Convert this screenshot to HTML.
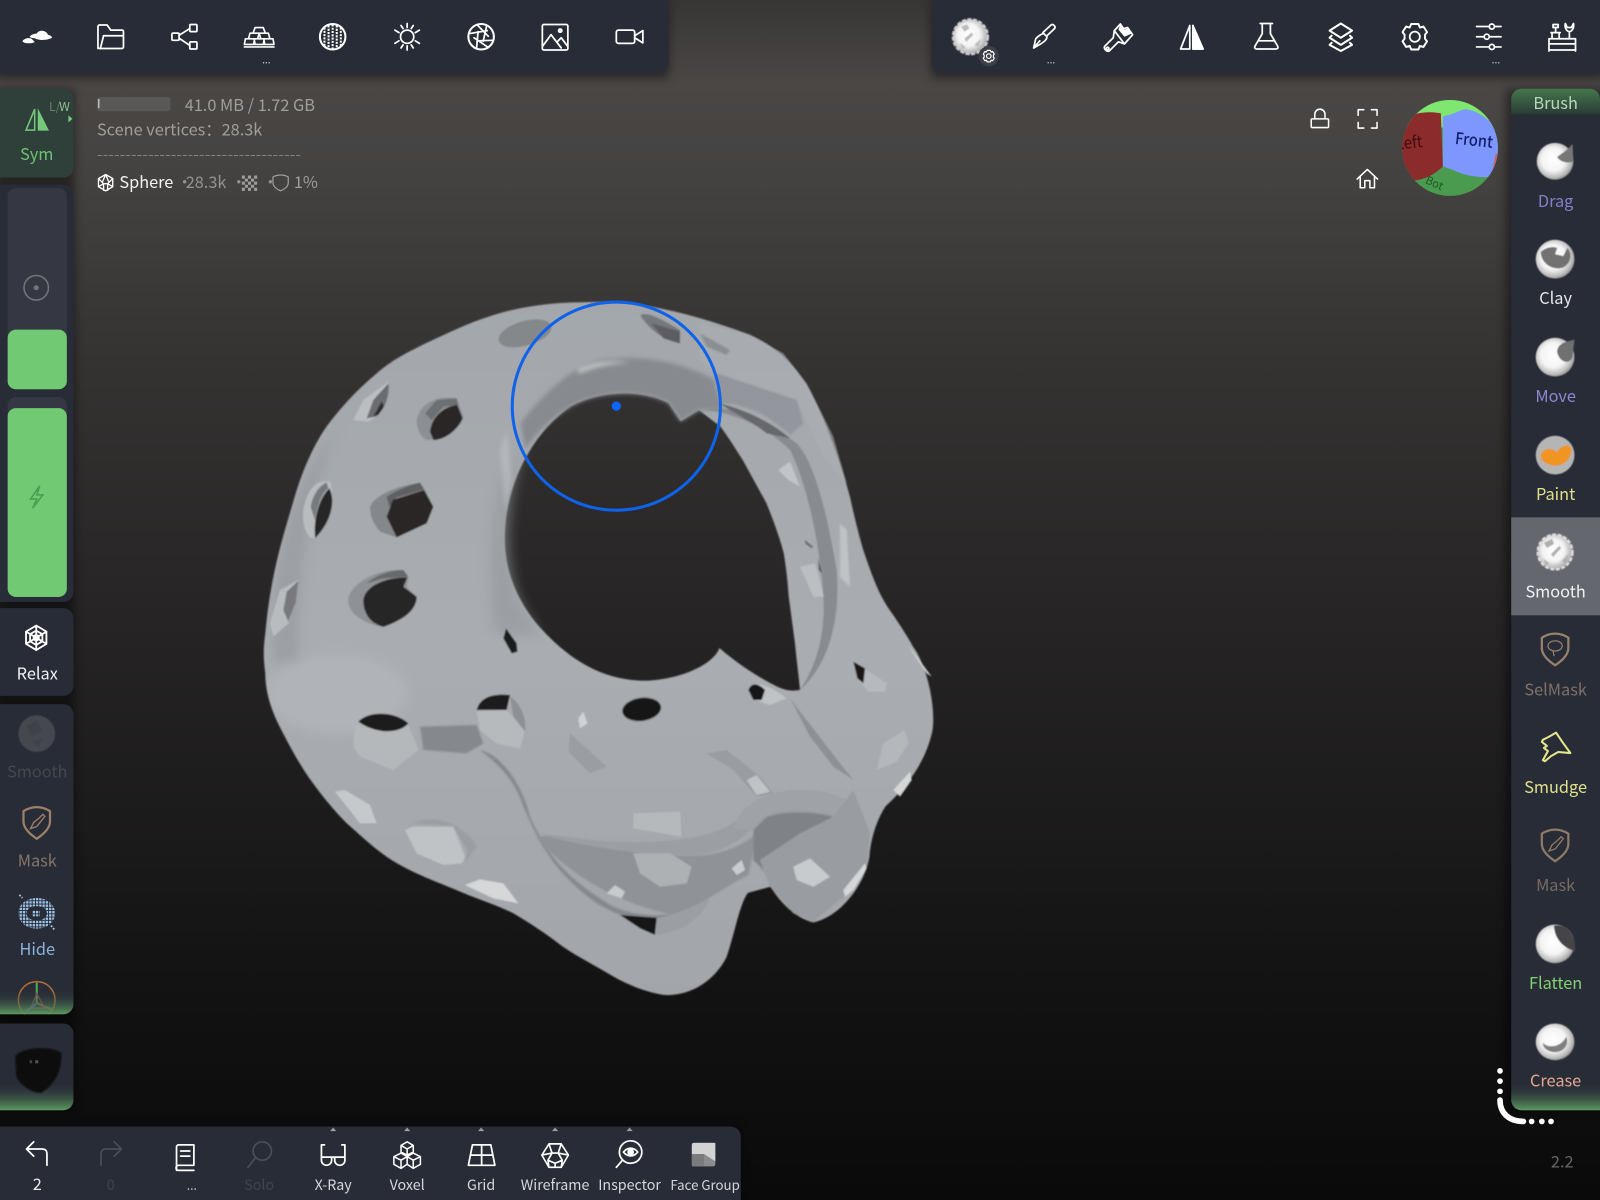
<!DOCTYPE html>
<html lang="en"><head><meta charset="utf-8"><title>Nomad Sculpt</title>
<style>
html,body{margin:0;padding:0;background:#111;width:1600px;height:1200px;overflow:hidden}
svg{display:block;position:absolute;left:0;top:0}
text{font-family:"Noto Sans CJK SC","Liberation Sans",sans-serif;font-size:16px}
.c{text-anchor:middle}
.i{fill:none;stroke:#fff;stroke-width:1.7;stroke-linejoin:round;stroke-linecap:round}
</style></head><body>
<svg width="1600" height="1200" viewBox="0 0 1568 1176" xmlns="http://www.w3.org/2000/svg">
<defs>
<linearGradient id="bg" x1="0" y1="0" x2="0" y2="1"><stop offset="0" stop-color="#383635"/><stop offset=".07" stop-color="#4a4745"/><stop offset=".15" stop-color="#444240"/><stop offset=".3" stop-color="#353332"/><stop offset=".5" stop-color="#272525"/><stop offset=".7" stop-color="#1b1a1a"/><stop offset=".85" stop-color="#111"/><stop offset="1" stop-color="#0a0a0a"/></linearGradient>
<linearGradient id="mesh" x1="0" y1="0" x2="0" y2="1"><stop offset="0" stop-color="#a3a7ab"/><stop offset=".5" stop-color="#a9adb1"/><stop offset="1" stop-color="#a2a5a9"/></linearGradient>
<linearGradient id="gb" x1="0" y1="0" x2="0" y2="1"><stop offset="0" stop-color="#282c36" stop-opacity="0"/><stop offset="1" stop-color="#5d9a60"/></linearGradient>
<linearGradient id="gt" x1="0" y1="0" x2="0" y2="1"><stop offset="0" stop-color="#44774c"/><stop offset="1" stop-color="#2a3b36"/></linearGradient>
<radialGradient id="ball" cx=".45" cy=".45" r=".58"><stop offset="0" stop-color="#fff"/><stop offset=".55" stop-color="#f4f4f4"/><stop offset=".85" stop-color="#bbb"/><stop offset="1" stop-color="#888"/></radialGradient>
<pattern id="dots" width="3.2" height="3.2" patternUnits="userSpaceOnUse"><rect width="2.3" height="2.3" fill="#9cc4e8"/></pattern>
<filter id="b05" x="-10%" y="-10%" width="120%" height="120%"><feGaussianBlur stdDeviation=".5"/></filter>
<filter id="b1" x="-10%" y="-10%" width="120%" height="120%"><feGaussianBlur stdDeviation=".9"/></filter>
<filter id="b2" x="-20%" y="-20%" width="140%" height="140%"><feGaussianBlur stdDeviation="2.2"/></filter>
<filter id="b5" x="-30%" y="-30%" width="160%" height="160%"><feGaussianBlur stdDeviation="6"/></filter>
<filter id="sh" x="-10%" y="-20%" width="120%" height="150%"><feGaussianBlur stdDeviation="5"/></filter>
<clipPath id="gz"><circle cx="1421" cy="145" r="47"/></clipPath>
<clipPath id="lp"><rect x="0" y="690" width="72" height="304"/></clipPath>
<clipPath id="meshclip"><path d="M600,296C640,298 686,310 735,328C765,342 778,358 790,376C805,400 825,455 833,487C838,510 842,525 846,539C855,565 860,580 872,598C882,612 890,625 895,634C908,652 917,690 914,715C908,745 890,770 868,790C858,805 853,825 852,840C848,865 825,898 797,904C780,900 765,885 755,869L733,875C725,885 720,915 712,938C700,962 675,977 650,975C632,972 615,965 601,957C585,947 570,940 552,928C535,915 520,905 503,895C485,886 470,882 454,875C430,865 410,858 389,846C370,835 355,820 340,807C328,795 318,783 307,768C295,752 283,730 274,712C264,692 260,675 260,660C258,645 258,635 260,621C262,600 264,585 268,565C273,540 279,520 287,493C295,465 305,440 320,418C335,398 350,382 369,366C385,352 400,345 418,336C440,326 460,316 483,309C505,302 525,299 549,297C570,296 585,296 600,296Z"/></clipPath>
<g id="shield"><path d="M0,-15C-6,-15 -10,-13 -13,-11V-1C-13,6 -6,12 0,16C6,12 13,6 13,-1V-11C10,-13 6,-15 0,-15Z" fill="none" stroke-width="2.2"/></g>
</defs>
<rect width="1568" height="1176" fill="url(#bg)"/>

<!-- mesh -->
<g filter="url(#b1)">
<path fill="url(#mesh)" fill-rule="evenodd" d="M600,296C640,298 686,310 735,328C765,342 778,358 790,376C805,400 825,455 833,487C838,510 842,525 846,539C855,565 860,580 872,598C882,612 890,625 895,634C908,652 917,690 914,715C908,745 890,770 868,790C858,805 853,825 852,840C848,865 825,898 797,904C780,900 765,885 755,869L733,875C725,885 720,915 712,938C700,962 675,977 650,975C632,972 615,965 601,957C585,947 570,940 552,928C535,915 520,905 503,895C485,886 470,882 454,875C430,865 410,858 389,846C370,835 355,820 340,807C328,795 318,783 307,768C295,752 283,730 274,712C264,692 260,675 260,660C258,645 258,635 260,621C262,600 264,585 268,565C273,540 279,520 287,493C295,465 305,440 320,418C335,398 350,382 369,366C385,352 400,345 418,336C440,326 460,316 483,309C505,302 525,299 549,297C570,296 585,296 600,296Z
M495,520C497,475 520,425 560,398C590,382 630,382 655,395L667,413L685,402L706,418C715,430 722,442 728,451L751,493C760,515 765,530 768,542C771,560 772,572 773,585L779,630C781,650 783,665 784,676C775,678 768,676 760,672C740,662 720,648 705,635C700,650 670,665 635,667C590,668 555,645 525,610C505,585 493,555 495,520Z"/>
<g clip-path="url(#meshclip)">
<!-- soft shading -->
<path d="M268,650C262,560 290,470 330,420C305,480 290,560 292,650Z" fill="#8f9398" opacity=".5" filter="url(#b5)"/>
<ellipse cx="330" cy="680" rx="70" ry="40" fill="#b8bbbf" opacity=".5" filter="url(#b5)"/>
<!-- rim left of hole -->
<path d="M484,620C478,560 480,500 495,465L515,432C500,480 490,540 510,590L530,625Z" fill="#93979b" opacity=".6" filter="url(#b5)"/>
<path d="M490,440L497,420L502,470L495,500Z" fill="#c3c6c9" opacity=".5" filter="url(#b2)"/>
<!-- top lip -->
<path d="M510,415C540,375 575,350 600,352C630,348 670,355 700,372L708,402L685,402L667,413L655,395C630,382 590,382 560,398C540,410 525,425 515,440Z" fill="#878a8e" filter="url(#b2)"/>
<path d="M565,362C580,354 600,352 618,356C600,356 582,360 568,366Z" fill="#bfc2c5" filter="url(#b2)"/>
</g>
<!-- arch interior, zoom10 coords -->
<g transform="translate(686 303.8) scale(.3267)">
<path d="M0,40L150,75L250,130L320,220L400,380L440,520L370,440L290,270L50,190L0,150Z" fill="#abafb3" opacity=".6"/>
<path d="M50,190L290,270L310,340L270,375C190,300 120,280 60,280Z" fill="#93969c" filter="url(#b2)"/>
<path d="M20,300C100,280 200,330 290,400C340,450 380,600 410,780C420,900 400,1050 300,1140C360,1050 375,950 370,860C360,700 320,520 270,420C200,350 100,310 20,300Z" fill="#888b90"/>
<path d="M60,280C140,300 220,340 270,385L200,370C150,330 100,310 60,280Z" fill="#66686c"/>
<path d="M420,640L440,660L450,830L420,800Z" fill="#c0c3c6" filter="url(#b2)"/>
<path d="M235,480L270,455L300,530L265,510Z" fill="#c2c5c7"/>
<path d="M300,770L345,760L372,860L340,860Z" fill="#bcbfc1"/>
<path d="M315,690L340,710L335,715L315,700Z" fill="#6a6c70"/>
<path d="M355,745L365,790L357,780Z" fill="#333"/>
<path d="M625,1005L695,1100L680,1090L640,1030Z" fill="#d5d8da"/>
<path d="M0,70L90,120L80,135L20,110Z" fill="#8a8d91" filter="url(#b2)"/>
</g>
<!-- zoom7 coords holes -->
<g transform="translate(254.8 284.2) scale(.3267)">
<ellipse cx="795" cy="130" rx="82" ry="37" transform="rotate(-16 795 130)" fill="#85888b"/>
<path d="M1140,75C1165,65 1200,85 1260,120L1260,160C1225,155 1175,130 1140,75Z" fill="#75787b"/>
<path d="M1175,100L1260,125V160L1210,145Z" fill="#5b5d60"/>
<path d="M280,390L310,330L385,275C390,320 370,370 325,395Z" fill="#bcbfc1"/>
<path d="M320,385L340,330L385,280C390,320 372,365 345,380Z" fill="#6a6c6f"/>
<path d="M340,380L365,335L372,350L355,375Z" fill="#2d2c2c"/>
<path d="M470,390C480,340 530,315 590,325L610,380C600,420 550,450 500,450C480,440 470,415 470,390Z" fill="#8c8f93"/>
<path d="M495,370L530,330L590,325L595,345L550,350L515,390Z" fill="#6d6f72"/>
<path d="M510,425C515,380 550,350 592,345L608,385C590,425 550,450 520,450Z" fill="#2a2828"/>
<path d="M130,660C140,600 170,565 210,575C225,610 215,680 165,745C140,750 125,700 130,660Z" fill="#b9bcbf"/>
<path d="M165,740C160,680 180,620 208,595C225,625 220,690 165,745Z" fill="#282726"/>
<path d="M152,650C160,610 180,585 200,578L205,595C185,610 170,650 165,690Z" fill="#777a7d"/>
<path d="M330,650C340,620 400,590 480,578L495,600L520,650L500,700L410,742L360,725C340,700 330,680 330,650Z" fill="#85888b"/>
<path d="M380,620C410,600 450,585 480,578L492,598L410,622L388,650Z" fill="#5f6063"/>
<path d="M380,680L398,630L492,600L520,650L500,700L410,742Z" fill="#292827"/>
<path d="M265,925C275,880 350,835 430,840L445,860L440,890L470,920C470,960 430,990 370,1012C310,1000 260,970 265,925Z" fill="#8e9195"/>
<path d="M320,880C355,850 400,840 430,840L445,860L370,865Z" fill="#67696c"/>
<path d="M310,930C315,890 370,862 442,862L430,890L470,920C470,960 430,990 370,1010C330,1000 310,970 310,930Z" fill="#272625"/>
<path d="M30,1000L60,900L115,870L110,930L85,1000L40,1040Z" fill="#b9bcbf"/>
<path d="M70,960L80,905L115,872L108,935L85,995Z" fill="#77797d"/>
<path d="M738,1015L770,1060L772,1085L755,1090L730,1045Z" fill="#1c1b1b"/>
</g>
<!-- lower-left zoom coords -->
<g transform="translate(274.4 646.8) scale(.3267)">
<path d="M420,200L590,195L610,250L560,280L430,270Z" fill="#85888c" filter="url(#b2)"/>
<path d="M600,270C650,280 720,350 750,470C800,580 850,650 1000,740C1100,780 1200,770 1260,730L1260,760C1150,800 1050,790 950,730C840,650 790,580 730,440C700,350 650,310 600,270Z" fill="#85888c" filter="url(#b2)"/>
<path d="M225,200C240,190 280,225 385,195L415,270L340,330L240,290L220,260Z" fill="#b5b8bb"/>
<path d="M235,185C260,155 340,150 385,190C360,220 290,225 235,185Z" fill="#1b1a1a"/>
<path d="M590,155L680,150L735,210L720,265L650,250L600,210Z" fill="#b7babd"/>
<path d="M590,150C600,110 640,100 690,105L680,150Z" fill="#1b1a1a"/>
<path d="M690,110C720,130 740,170 735,215L700,170Z" fill="#8d9094"/>
<path d="M165,395L195,390L270,435L290,490L240,490Z" fill="#c6c9cb"/>
<path d="M375,510L400,500L520,500L565,575L545,610L490,615L410,580Z" fill="#c0c3c5"/>
<path d="M555,675L600,658L670,670L715,730L640,715Z" fill="#d5d7d9"/>
<path d="M430,480C480,470 560,500 590,560L560,600L520,500L400,490Z" fill="#94979b" opacity=".6" filter="url(#b2)"/>
</g>
<!-- zoom8 coords -->
<g transform="translate(490 607.6) scale(.3267)">
<path d="M110,650C200,760 350,850 520,885C600,860 690,790 745,765L770,640C700,700 600,720 500,700C350,680 200,640 110,650Z" fill="#8f9297" filter="url(#b2)"/>
<path d="M120,640C250,660 400,680 560,655C640,645 700,620 740,570L760,620C700,690 600,720 480,705C330,690 200,670 120,640Z" fill="#9b9ea3" filter="url(#b1)"/>
<path d="M700,625C720,560 780,520 880,510C950,505 1010,520 1045,545L1000,600C950,570 850,570 800,590L760,630Z" fill="#9fa2a7"/>
<path d="M760,630L800,590C860,570 950,575 1000,590L900,680L800,760L760,720Z" fill="#7f8286" filter="url(#b2)"/>
<path d="M810,800L780,720L900,640L1000,590L1060,510L1110,640L1100,740L1030,830L940,905L880,880Z" fill="#999ca1" filter="url(#b1)"/>
<path d="M880,740L930,715L990,770L940,800L890,780Z" fill="#c8cbcd"/>
<path d="M1030,810L1095,730L1100,745L1060,810L1035,830Z" fill="#d4d6d8"/>
<path d="M400,700L510,700L575,740L560,790L480,800L420,760Z" fill="#aeb1b4" filter="url(#b1)"/>
<path d="M320,820L345,795L375,815L365,835Z" fill="#c7cacc"/>
<path d="M695,745L725,720L735,750L710,765Z" fill="#c9ccce"/>
<path d="M400,580L540,575L545,650L400,625Z" fill="#b6b9bc" filter="url(#b1)"/>
<path d="M210,340L320,440L270,460L205,395Z" fill="#9a9da1"/>
<path d="M235,295L250,275L262,310L240,325Z" fill="#d0d3d5"/>
<path d="M620,400L680,390L780,470L820,520L770,530L700,450Z" fill="#999ca0" filter="url(#b1)"/>
<path d="M740,480L770,465L810,515L770,525Z" fill="#c0c3c6" filter="url(#b1)"/>
<path d="M870,235L1020,430L1060,480L1000,440L930,350Z" fill="#8d9094" filter="url(#b1)"/>
<path d="M1150,370L1215,330L1225,370L1190,425L1130,450Z" fill="#b5b8bb"/>
<path d="M1180,510L1230,455L1235,480L1200,530Z" fill="#d4d6d8"/>
<ellipse cx="425" cy="268" rx="60" ry="37" transform="rotate(-8 425 268)" fill="#8f9296"/>
<ellipse cx="425" cy="268" rx="58" ry="34" transform="rotate(-8 425 268)" fill="#191818"/>
<path d="M745,210C760,180 800,190 860,235L810,255L765,240Z" fill="#c0c3c5"/>
<path d="M745,210C755,185 775,190 795,210L785,240L760,240Z" fill="#191818"/>
<path d="M1060,125L1100,150L1160,190L1155,215L1105,215L1075,180Z" fill="#b7babd"/>
<path d="M1060,125L1095,145L1090,190L1072,175Z" fill="#1a1919"/>
<path d="M360,885L470,893L465,945L420,925Z" fill="#141313"/>
<path d="M470,895C540,880 600,850 630,835C610,880 570,930 470,945Z" fill="#9b9ea2" filter="url(#b1)"/>
</g>
</g>
<!-- cursor -->
<circle cx="604" cy="398" r="102" fill="none" stroke="#0f62ea" stroke-width="3"/>
<circle cx="604" cy="398" r="4.500" fill="#0a66ff"/>

<!-- shadows -->
<g filter="url(#sh)" fill="#000" opacity=".45">
<rect x="-5" y="0" width="660" height="76"/><rect x="913" y="0" width="660" height="76"/>
<rect x="1476" y="88" width="100" height="1000"/><rect x="-5" y="88" width="78" height="1000"/>
<rect x="-5" y="1104" width="730" height="80"/>
</g>

<!-- top bars -->
<path d="M0,0H655V62a10,10 0 0 1 -10,10H0Z" fill="#282c36"/>
<path d="M913,0H1568V72H923a10,10 0 0 1 -10,-10Z" fill="#282c36"/>
<!-- logo -->
<path d="M29,36C31,33.500 34,33 36,33C37,30 42,29 45,31.500C46,32 46.500,33 47,34C49,34.500 51,35.500 51,37C47,39.500 38,40 34,37.500C32,37.500 30,37 29,36Z" fill="#fff"/>
<path d="M22,40.500C23,38 28,36.500 31,38L34,41C32,43 24,43 22,40.500Z" fill="#fff"/>
<g class="i">
<!-- folder -->
<g transform="translate(108.500 36)"><path d="M-12.500,11.500V-10a1.500,1.500 0 0 1 1.500,-1.500H-3.500L0,-6.500H11a1.500,1.500 0 0 1 1.500,1.500V10a1.500,1.500 0 0 1 -1.500,1.500H-11a1.500,1.500 0 0 1 -1.500,-1.500M-10,11L-7,-1H12.500"/></g>
<!-- nodes -->
<g transform="translate(181 36)"><rect x="-12.500" y="-3.500" width="7" height="7" rx="1"/><rect x="5" y="-12" width="7" height="7" rx="1"/><rect x="5" y="5" width="7" height="7" rx="1"/><path d="M-5.500,-1.500L5,-8M-5.500,1.500L5,8.500"/></g>
<!-- gold -->
<g transform="translate(254 36)" stroke-width="1.600"><path d="M-4,-9H4L6,-3.500H-6ZM-9,-3.500H0L1.500,2H-10.500ZM0,-3.500H9L10.500,2H-1.500ZM-13.500,2H-5L-4,7.500H-14.500ZM-4.500,2H4.500L5.500,7.500H-5.500ZM5,2H13.500L14.500,7.500H4Z"/><path d="M-14.500,10H14.500"/></g>
<!-- mesh ball -->
<g transform="translate(326 36)"><circle r="12.500" stroke-width="2"/><path d="M-8,-9V9M-4,-11V11M0,-12V12M4,-11V11M8,-9V9" stroke-dasharray="2 1.200" stroke-linecap="butt" stroke-width="2"/></g>
<!-- sun -->
<g transform="translate(399 36)"><circle r="6.500"/><path d="M0,-13V-9M0,9V13M-12,-6.500L-8,-4M8,4L12,6.500M-12,6.500L-8,4M8,-4L12,-6.500M-6,-11L-4,-8M4,8L6,11M6,-11L4,-8M-4,8L-6,11"/></g>
<!-- aperture -->
<g transform="translate(471.500 36)"><circle r="12.500" stroke-width="2"/><path d="M-4,-11.800L7,-0.500M5.500,-11L2,4.500M11.800,3.500L-3.500,4M7,10.500L-7,1M-4.500,11.500L-3,-5M-12,-3L6,-6"/></g>
<!-- image -->
<g transform="translate(544 36)"><rect x="-12.500" y="-12" width="25" height="25" rx="1.500"/><circle cx="5" cy="-6" r="1.600" fill="#fff"/><path d="M-12,9L-4,-2L6,11M2,5L6,1L12,9"/></g>
<!-- camera -->
<g transform="translate(617 36)"><rect x="-13" y="-6.500" width="18" height="13" rx="2"/><path d="M5,-1L13,-6V6L5,1"/></g>

<!-- brush -->
<g transform="translate(1023 36)"><path d="M-10,11L-8,2C-5,-1 -2,-3 0,-3L3,0C3,3 0,5 -3,7ZM-1,-4L7,-11.500C9,-13 12,-10 10.500,-8L3,-1M-10,11L-4,4"/></g>
<!-- big brush -->
<path d="M1092,30L1098,23.500L1101,28L1105,27L1110,34L1102,43L1096,41L1087,50C1084,51 1081,47 1083,45L1091,37ZM1092,30L1102,43"/>
<circle cx="1085.500" cy="47.500" r="1.200"/>
<path d="M1098,24L1101,29L1105,28L1109,33L1102,36L1096,29Z" fill="#fff" stroke="none"/>
<!-- sym -->
<g transform="translate(1168 36)"><path d="M-2,-11V12H-11ZM1,-11L11,12H1Z"/><path d="M1,-11L11,12H1Z" fill="#fff"/></g>
<!-- flask -->
<g transform="translate(1241 36)"><path d="M-6,-13H6M-4,-13V-3L-11,9C-12,11 -11,12 -9,12H9C11,12 12,11 11,9L4,-3V-13M-7.500,4H7.500"/></g>
<!-- layers -->
<g transform="translate(1314 36)"><path d="M0,-13L11,-6L0,1L-11,-6ZM-9,-1L-11,1L0,8L11,1L9,-1M-9,6L-11,8L0,14L11,8L9,6" stroke-width="2"/></g>
<!-- gear -->
<g transform="translate(1386.500 36)"><path d="M-3.500,-12.500H3.500L5,-9L8.500,-10L12,-4.500L10,-2V2L12,4.500L8.500,10L5,9L3.500,12.500H-3.500L-5,9L-8.500,10L-12,4.500L-10,2V-2L-12,-4.500L-8.500,-10L-5,-9Z" stroke-width="1.900"/><circle r="5"/></g>
<!-- sliders -->
<g transform="translate(1459 36)"><path d="M-12,-10H12M-12,0H12M-12,10H12"/><circle cx="3" cy="-10" r="2.500" fill="#282c36"/><circle cx="-2" cy="0" r="2.500" fill="#282c36"/><circle cx="3" cy="10" r="2.500" fill="#282c36"/></g>
<!-- tools -->
<g transform="translate(1531 36)"><path d="M-13,2H13M-13,7H13M-13,13H13M-13,2V14M13,2V14M-10,2V-4H-3V2M-11,-4H-2M-6.500,-4V-9M-9,-9H-4V-12H-9ZM7,2V-5M3,-13C2,-8 5,-5 7,-5C9,-5 12,-8 11,-13L9,-9H5Z"/></g>
</g>
<text x="261" y="62" class="c" fill="#ddd" style="font-size:10px">...</text>
<text x="1030" y="62" class="c" fill="#ddd" style="font-size:10px">...</text>
<text x="1466" y="62" class="c" fill="#ddd" style="font-size:10px">...</text>
<!-- smooth ball -->
<g filter="url(#b05)"><circle cx="951" cy="36" r="17" fill="url(#ball)" stroke="#cfcfcf" stroke-dasharray="4 1.500" stroke-width="2.500"/>
<path d="M942,26L948,24L950,28L945,31ZM955,44L961,38L959,46ZM941,42L946,46L943,49ZM945,38L952,32L954,34L947,41Z" fill="#bbb"/></g>
<circle cx="969" cy="55" r="10" fill="#3c3f47"/>
<g transform="translate(969 55) scale(.45)" class="i" style="stroke-width:2.600"><path d="M-3.500,-12.500H3.500L5,-9L8.500,-10L12,-4.500L10,-2V2L12,4.500L8.500,10L5,9L3.500,12.500H-3.500L-5,9L-8.500,10L-12,4.500L-10,2V-2L-12,-4.500L-8.500,-10L-5,-9Z"/><circle r="5"/></g>

<!-- info -->
<rect x="95" y="95" width="72" height="14" rx="3" fill="#5a5856"/><rect x="96" y="97" width="1.500" height="9" fill="#bbb"/>
<text x="181" y="109" fill="#a09e9b">41.0 MB / 1.72 GB</text>
<text x="95" y="133" fill="#a09e9b">Scene vertices：28.3k</text>
<text x="95" y="156" fill="#8f8d8a" textLength="200" lengthAdjust="spacingAndGlyphs" style="font-size:12px">------------------------------------</text>
<g transform="translate(103.500 179)" fill="none" stroke="#fff" stroke-width="1.300"><path d="M0,-8L7,-4V4L0,8L-7,4V-4ZM-7,-4L-2,1L-2,8M7,-4L2,1L2,8M-2,1H2M0,-8L-3,-1M0,-8L3,-1M-7,4L-2,1M7,4L2,1"/></g>
<text x="117" y="184" fill="#f2f2f2">Sphere</text>
<text x="173" y="184" fill="#94928f">·</text>
<text x="182" y="184" fill="#94928f">28.3k</text>
<text x="226" y="184" fill="#94928f">·</text>
<rect x="237" y="172" width="15" height="15" fill="url(#chk)"/>
<g fill="#a09e9b"><path d="M237,172h3v3h-3zM243,172h3v3h-3zM249,172h3v3h-3zM240,175h3v3h-3zM246,175h3v3h-3zM237,178h3v3h-3zM243,178h3v3h-3zM249,178h3v3h-3zM240,181h3v3h-3zM246,181h3v3h-3zM237,184h3v3h-3zM243,184h3v3h-3zM249,184h3v3h-3z"/></g>
<text x="257" y="184" fill="#94928f">·</text>
<path d="M275,171.500C271.500,171.500 269,172.500 267.500,173.500V179C267.500,182.500 271,185.500 275,187C279,185.500 282.500,182.500 282.500,179V173.500C281,172.500 278.500,171.500 275,171.500Z" fill="none" stroke="#a09e9b" stroke-width="1.200"/>
<text x="288" y="184" fill="#a09e9b">1%</text>

<!-- view icons -->
<g class="i" style="stroke-width:1.500">
<path d="M1286,116.500h15a1,1 0 0 1 1,1V124a1,1 0 0 1 -1,1H1286a1,1 0 0 1 -1,-1V117.500a1,1 0 0 1 1,-1ZM1288.500,116.500V112a5,5 0 0 1 10,0V116.500"/>
<path d="M1331,113V107.500H1336.500M1344,107.500H1349.500V113M1349.500,120V125.500H1344M1336.500,125.500H1331V120"/>
<path d="M1330,175.500L1340,166L1350,175.500M1333,173V184H1337.500V177H1342.500V184H1347V173"/>
</g>
<!-- gizmo -->
<g clip-path="url(#gz)">
<rect x="1370" y="95" width="105" height="100" fill="#4a9a50"/>
<path d="M1375,125L1390,98H1455L1475,125Z" fill="#7fe66f"/>
<path d="M1370,120C1380,112 1395,108 1412,111L1414,163C1405,172 1395,176 1385,177L1370,170Z" fill="#8b2b2b"/>
<path d="M1414,114C1425,112 1430,108 1436,107C1448,108 1460,118 1470,128V175L1462,173C1450,175 1435,172 1425,167L1414,163Z" fill="#7e97ff"/>
<path d="M1466,150L1470,155L1463,175H1461Z" fill="#c9605f"/>
<text x="1368" y="145" fill="#3f0c0c" transform="rotate(-6 1385 140)" textLength="26" lengthAdjust="spacingAndGlyphs" style="font-size:16px">Left</text>
<text x="1426" y="143" fill="#13206e" transform="rotate(6 1445 138)" textLength="37" lengthAdjust="spacingAndGlyphs" style="font-size:16px;font-weight:500">Front</text>
<text x="1397" y="185" fill="#1d5a24" transform="rotate(24 1410 180)" style="font-size:11px">Bot</text>
</g>

<!-- left panels -->
<path d="M0,87H62a10,10 0 0 1 10,10V164a10,10 0 0 1 -10,10H0Z" fill="#2f3f39"/>
<path d="M34,107V127.500H25.500Z" fill="#2f3f39" stroke="#76c97a" stroke-width="1.500"/>
<path d="M37,106L48,128H37Z" fill="#76c97a"/>
<text x="48" y="109" fill="#6b7c72" style="font-size:12px">L/</text><text x="58" y="109" fill="#8fbd94" style="font-size:12px">W</text>
<path d="M67,113l4,3.500l-4,3.500z" fill="#76c97a"/>
<text x="36" y="157" class="c" fill="#6fc272">Sym</text>

<path d="M0,181H62a10,10 0 0 1 10,10V580a10,10 0 0 1 -10,10H0Z" fill="#282c36"/>
<rect x="7.500" y="184.500" width="58" height="197" rx="8" fill="#353842"/>
<rect x="7.500" y="323" width="58" height="58.500" rx="8" fill="#71c974"/>
<circle cx="35.500" cy="282" r="12" fill="none" stroke="#73757a" stroke-width="1.500"/><circle cx="35.500" cy="282" r="2.500" fill="#73757a"/>
<rect x="7.500" y="389" width="58" height="196" rx="8" fill="#353842"/>
<rect x="7.500" y="400" width="58" height="185" rx="8" fill="#71c974"/>
<path d="M39,476L30,489H36L32,498L42,485H36Z" fill="none" stroke="#4b9d52" stroke-width="1.500"/>

<path d="M0,596H62a10,10 0 0 1 10,10V672a10,10 0 0 1 -10,10H0Z" fill="#282c36"/>
<g transform="translate(35.500 625)" fill="none" stroke="#fff" stroke-width="1.800"><path d="M0,-12L10,-6V6L0,12L-10,6V-6ZM0,-7L6,-3.500V3.500L0,7L-6,3.500V-3.500ZM0,-3L2.500,-1.500V1.500L0,3L-2.500,1.500V-1.500ZM0,-12V12M-10,-6L10,6M10,-6L-10,6"/></g>
<text x="36.500" y="666" class="c" fill="#f2f2f2">Relax</text>

<path d="M0,690H62a10,10 0 0 1 10,10V984a10,10 0 0 1 -10,10H0Z" fill="#282c36"/>
<g filter="url(#b05)"><circle cx="36" cy="719" r="18" fill="#45484f"/>
<path d="M26,712L36,706L42,716L32,722ZM30,726L42,724L38,732Z" fill="#3f424a"/></g>
<text x="36.500" y="762" class="c" fill="#44474e">Smooth</text>
<g transform="translate(36 806)" stroke="#9d8069" fill="none"><use href="#shield"/><path d="M-6,6L-3,0L2,-4L6,-8L8,-6L4,-1L0,4Z" stroke-width="1.300"/></g>
<text x="36.500" y="849" class="c" fill="#85766a">Mask</text>
<path fill-rule="evenodd" fill="url(#dots)" d="M36,880C47,880 54,887 54,895C54,903 47,910 36,910C25,910 18,903 18,895C18,887 25,880 36,880ZM36,888C30,888 26,891 26,895C26,899 30,902 36,902C42,902 46,899 46,895C46,891 42,888 36,888Z"/>
<rect x="32" y="892" width="7" height="6" fill="url(#dots)"/>
<path d="M19,877L22,880M50,907L54,912" stroke="#9cc4e8" stroke-width="1.800" stroke-dasharray="1.800 1.400"/>
<text x="36.500" y="936" class="c" fill="#8ab2dc">Hide</text>
<g clip-path="url(#lp)"><g fill="none" transform="translate(36 980)"><circle r="18" stroke="#b56f35" stroke-width="1.500"/><path d="M0,-17V3" stroke="#4caf50" stroke-width="2"/><path d="M0,3L14,9" stroke="#b85b4a" stroke-width="2"/><path d="M0,3L-10,11" stroke="#4a6fc4" stroke-width="2"/><path d="M-6,8L0,-6L8,8Z" stroke="#a04a60" stroke-width="1.200"/></g></g>
<path d="M0,970H72V984a10,10 0 0 1 -10,10H0Z" fill="url(#gb)"/>

<path d="M0,1003H62a10,10 0 0 1 10,10V1078a10,10 0 0 1 -10,10H0Z" fill="#282c36"/>
<path d="M0,1060H72V1078a10,10 0 0 1 -10,10H0Z" fill="url(#gb)"/>
<path filter="url(#b1)" d="M15,1035C20,1027 50,1024 60,1032C61,1045 56,1062 40,1071C30,1071 19,1062 16,1055Z" fill="#080808"/>
<rect x="29" y="1039" width="2.500" height="3" fill="#444"/><rect x="34.500" y="1039" width="3" height="3" fill="#555"/>

<!-- right panel -->
<path d="M1481,97a10,10 0 0 1 10,-10H1558a10,10 0 0 1 10,10V1088H1491a10,10 0 0 1 -10,-10Z" fill="#282c36"/>
<path d="M1481,97a10,10 0 0 1 10,-10H1558a10,10 0 0 1 10,10V112H1481Z" fill="url(#gt)"/>
<path d="M1481,1060H1568V1088H1491a10,10 0 0 1 -10,-10Z" fill="url(#gb)"/>
<text x="1524.500" y="107" class="c" fill="#b7d8ba">Brush</text>
<rect x="1481" y="507" width="87" height="96" fill="#64676e"/>

<g filter="url(#b05)">
<circle cx="1524" cy="158" r="18" fill="url(#ball)"/><path d="M1526,154C1530,150 1536,148 1541,141L1542,158C1538,160 1530,160 1526,154Z" fill="#777"/>
<circle cx="1524" cy="254" r="19" fill="url(#ball)"/><path d="M1510,247C1514,243 1521,241 1526,243L1524,249L1532,251L1536,243C1541,248 1540,258 1532,262C1522,266 1510,258 1510,247Z" fill="#727272"/>
<circle cx="1524" cy="350" r="19" fill="url(#ball)"/><path d="M1526,345C1526,338 1532,335 1543,333L1541,350C1538,358 1528,355 1526,345Z" fill="#707070"/>
<circle cx="1524" cy="446" r="19" fill="#b5b5b5"/><path d="M1510,445C1515,437 1522,440 1526,443C1530,436 1538,434 1540,440C1540,452 1530,458 1520,456C1513,454 1509,450 1510,445Z" fill="#f09424"/>
<circle cx="1524" cy="541" r="17" fill="url(#ball)" stroke="#ddd" stroke-width="2.500" stroke-dasharray="4 1.500"/><path d="M1513,532L1521,528L1523,533L1516,537ZM1530,550L1537,543L1535,552ZM1513,548L1518,552L1515,555ZM1520,543L1528,535L1530,537L1522,546Z" fill="#b0b0b0"/>
<circle cx="1524" cy="925" r="19" fill="url(#ball)"/><path d="M1523,907C1535,905 1544,915 1544,932C1533,930 1523,920 1523,907Z" fill="#44454a"/>
<ellipse cx="1524" cy="1021" rx="19" ry="18" fill="url(#ball)"/><path d="M1512,1022C1518,1028 1530,1026 1535,1016C1538,1024 1532,1032 1522,1031C1516,1030 1512,1027 1512,1022Z" fill="#808080"/>
</g>
<text x="1524.500" y="203" class="c" fill="#8180c9">Drag</text>
<text x="1524.500" y="298" class="c" fill="#e8e8e8">Clay</text>
<text x="1524.500" y="394" class="c" fill="#8c87d3">Move</text>
<text x="1524.500" y="490" class="c" fill="#dfe08d">Paint</text>
<text x="1524.500" y="585.500" class="c" fill="#f2f2f2">Smooth</text>
<g transform="translate(1524 636)" stroke="#99816d" fill="none"><use href="#shield"/><ellipse cx="0" cy="-3" rx="7" ry="5" stroke-width="1.200"/><path d="M-2,2L-1,7" stroke-width="1.200"/></g>
<text x="1524.500" y="681.500" class="c" fill="#7f7166">SelMask</text>
<path d="M1512,725L1518,722L1525,718L1531,727L1539,738L1527,737L1520,741L1514,746L1512,745L1517,736L1513,733L1516,731L1511,727Z" fill="none" stroke="#e6e78d" stroke-width="2" stroke-linejoin="round"/>
<text x="1524.500" y="777" class="c" fill="#dfe08d">Smudge</text>
<g transform="translate(1524 828)" stroke="#8f7a68" fill="none"><use href="#shield"/><path d="M-6,6L-3,0L2,-4L6,-8L8,-6L4,-1L0,4Z" stroke-width="1.300"/></g>
<text x="1524.500" y="873" class="c" fill="#776b63">Mask</text>
<text x="1524.500" y="969" class="c" fill="#82d070">Flatten</text>
<text x="1524.500" y="1065" class="c" fill="#e6a590">Crease</text>

<!-- corner handle -->
<g fill="#fff"><circle cx="1470" cy="1049.500" r="2.800"/><circle cx="1470" cy="1059.500" r="2.800"/><circle cx="1470" cy="1069.500" r="2.800"/><circle cx="1501" cy="1099" r="2.800"/><circle cx="1511" cy="1099" r="2.800"/><circle cx="1520" cy="1099" r="2.800"/></g>
<path d="M1470,1078C1470,1092 1480,1099 1493,1099" fill="none" stroke="#fff" stroke-width="5.500" stroke-linecap="round"/>
<text x="1531" y="1144" class="c" fill="#666">2.2</text>

<!-- bottom bar -->
<path d="M0,1104H716a10,10 0 0 1 10,10V1176H0Z" fill="#282c36"/>
<g fill="#9a9da2"><path d="M326.500,1105l3,3.500h-6zM399,1105l3,3.500h-6zM471.500,1105l3,3.500h-6zM544,1105l3,3.500h-6zM617,1105l3,3.500h-6z"/></g>
<g class="i">
<path d="M46,1142V1131C46,1127 44,1126 41,1126H27M33,1119L26,1126L33,1133"/>
<path d="M99,1142V1131C99,1127 101,1126 104,1126H118M112,1119L119,1126L112,1133" stroke="#4a4d55"/>
<path d="M173,1147V1124a2,2 0 0 1 2,-2H190V1142H175a2,2 0 0 0 0,5H190M173,1146V1142M177,1128H186M177,1133H186"/>
<path d="M243,1144L250,1135" stroke="#4a4d55"/><circle cx="257" cy="1128" r="9" stroke="#4a4d55"/>
<path d="M315,1122V1134M338,1122V1134M315,1122H318M335,1122H338M315,1134H325V1137a5,5 0 0 1 -10,0ZM328,1134H338V1137a5,5 0 0 1 -10,0ZM325,1134H328"/>
<g transform="translate(399 1132)" stroke-width="1.500"><path d="M0,-13L6,-9.500V-3L0,0L-6,-3V-9.500ZM-6,-9.500L0,-6L6,-9.500M0,-6V0M-6,-2L0,1.500V9L-6,13L-13,9V1.500ZM-13,1.500L-6,5L0,1.500M-6,5V13M6,-2L13,1.500V9L6,13L0,9V1.500ZM0,1.500L6,5L13,1.500M6,5V13"/></g>
<path d="M463,1122H481L485,1142H459ZM472,1122V1142M461,1132H483"/>
<g transform="translate(544 1132)" stroke-width="1.600"><path d="M-6,-11H6L13,0L6,12H-6L-13,0ZM-6,-11L-3,-2L-13,0M6,-11L3,-2L13,0M-3,-2H3L7,5L0,8L-7,5ZM-7,5L-6,12M7,5L6,12M0,8V12M-3,-2L-7,5M3,-2L7,5"/></g>
<g transform="translate(618 1129)"><circle r="11"/><path d="M-7,0C-3,-5 3,-5 7,0C3,5 -3,5 -7,0Z"/><circle r="2.500" fill="#fff"/><path d="M-8,8L-14,15"/></g>
</g>
<rect x="678" y="1120" width="23" height="23" rx="2" fill="#8b8c8e"/><path d="M678,1122a2,2 0 0 1 2,-2H701V1138L690,1131H678Z" fill="#d3d3d3"/><path d="M690,1131V1143H678V1131Z" fill="#7a7b7d"/>
<g fill="#d5d7da">
<text x="36.500" y="1166" class="c" fill="#e8e8e8">2</text>
<text x="108.500" y="1166" class="c" fill="#41444c" style="font-size:14px">0</text>
<text x="188" y="1166" class="c" fill="#bbb" style="font-size:12px">...</text>
<text x="254" y="1166" class="c" fill="#41444c" style="font-size:14px">Solo</text>
<text x="326.500" y="1166" class="c" style="font-size:14px">X-Ray</text>
<text x="399" y="1166" class="c" style="font-size:14px">Voxel</text>
<text x="471.500" y="1166" class="c" style="font-size:14px">Grid</text>
<text x="544" y="1166" class="c" style="font-size:14px">Wireframe</text>
<text x="617" y="1166" class="c" style="font-size:14px">Inspector</text>
<text x="691" y="1166" class="c" style="font-size:13px">Face Group</text>
</g>
</svg>
</body></html>
